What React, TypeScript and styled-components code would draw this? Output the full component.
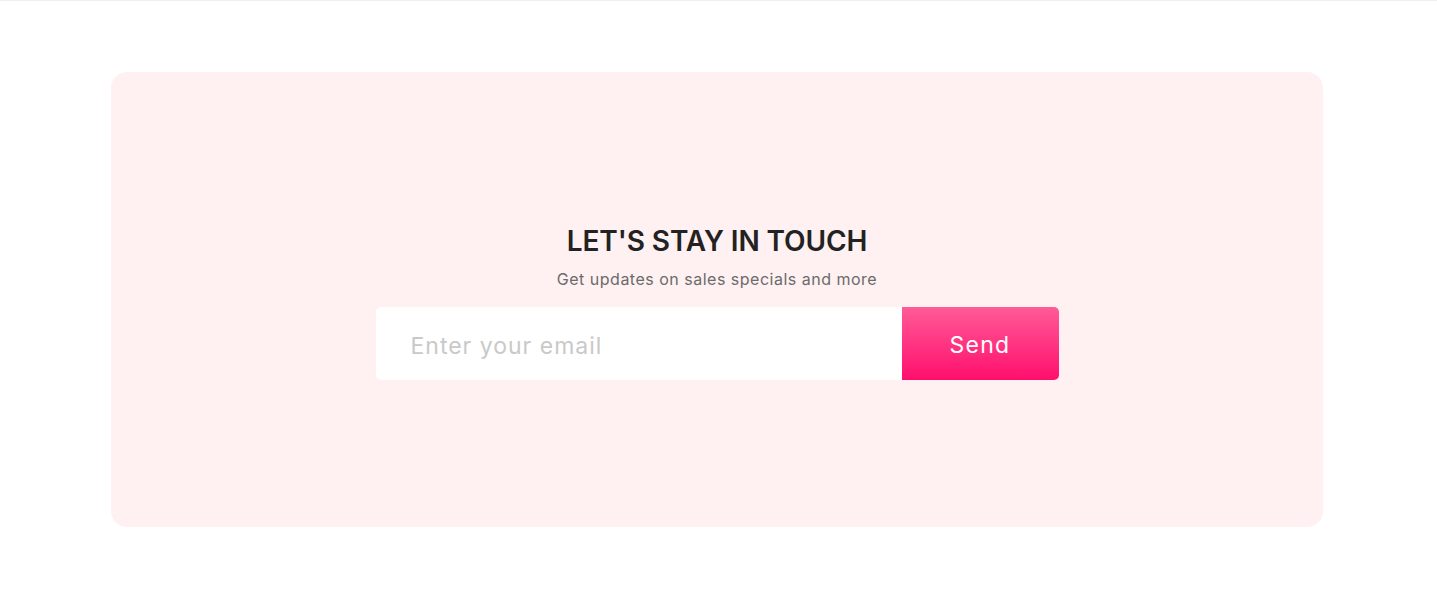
import React from "react";
import styled, { createGlobalStyle } from "styled-components";

const Global = createGlobalStyle`
  html, body { margin: 0; padding: 0; background: #ffffff; }
  body { font-family: Inter, "Open Sans", sans-serif; }
  * { box-sizing: border-box; }
`;

const Page = styled.div`
  border-top: 1px solid #efefef;
  padding: 71px 114px 0 111px;
`;

const Card = styled.section`
  height: 455px;
  background: #fff0f1;
  border-radius: 16px;
  display: flex;
  flex-direction: column;
  align-items: center;
  padding-top: 152px;
`;

const Title = styled.h2`
  margin: 0;
  font-size: 28px;
  line-height: 34px;
  font-weight: 600;
  color: #222222;
  letter-spacing: -0.1px;
`;

const Subtitle = styled.p`
  margin: 10px 0 0;
  font-size: 16px;
  line-height: 22px;
  font-weight: 400;
  color: #6b6b6b;
  letter-spacing: 0.5px;
`;

const Form = styled.form`
  margin-top: 17px;
  display: flex;
  width: 683px;
  height: 73px;
`;

const Input = styled.input`
  flex: 1;
  border: none;
  outline: none;
  background: #ffffff;
  border-radius: 5px 0 0 5px;
  padding: 5px 35px 0;
  font-family: inherit;
  font-size: 23px;
  letter-spacing: 1px;
  color: #333;
  &::placeholder { color: #c9c9c9; }
`;

const Button = styled.button`
  width: 157px;
  border: none;
  border-radius: 0 5px 5px 0;
  background: linear-gradient(180deg, #ff5b97 0%, #ff0f6d 100%);
  color: #ffffff;
  font-family: inherit;
  font-size: 23px;
  font-weight: 400;
  letter-spacing: 1.3px;
  padding: 2px 0 0;
  cursor: pointer;
`;

export default function App() {
  return (
    <>
      <Global />
      <Page>
        <Card>
          <Title>LET'S STAY IN TOUCH</Title>
          <Subtitle>Get updates on sales specials and more</Subtitle>
          <Form onSubmit={(e) => e.preventDefault()}>
            <Input type="email" placeholder="Enter your email" />
            <Button type="submit">Send</Button>
          </Form>
        </Card>
      </Page>
    </>
  );
}
